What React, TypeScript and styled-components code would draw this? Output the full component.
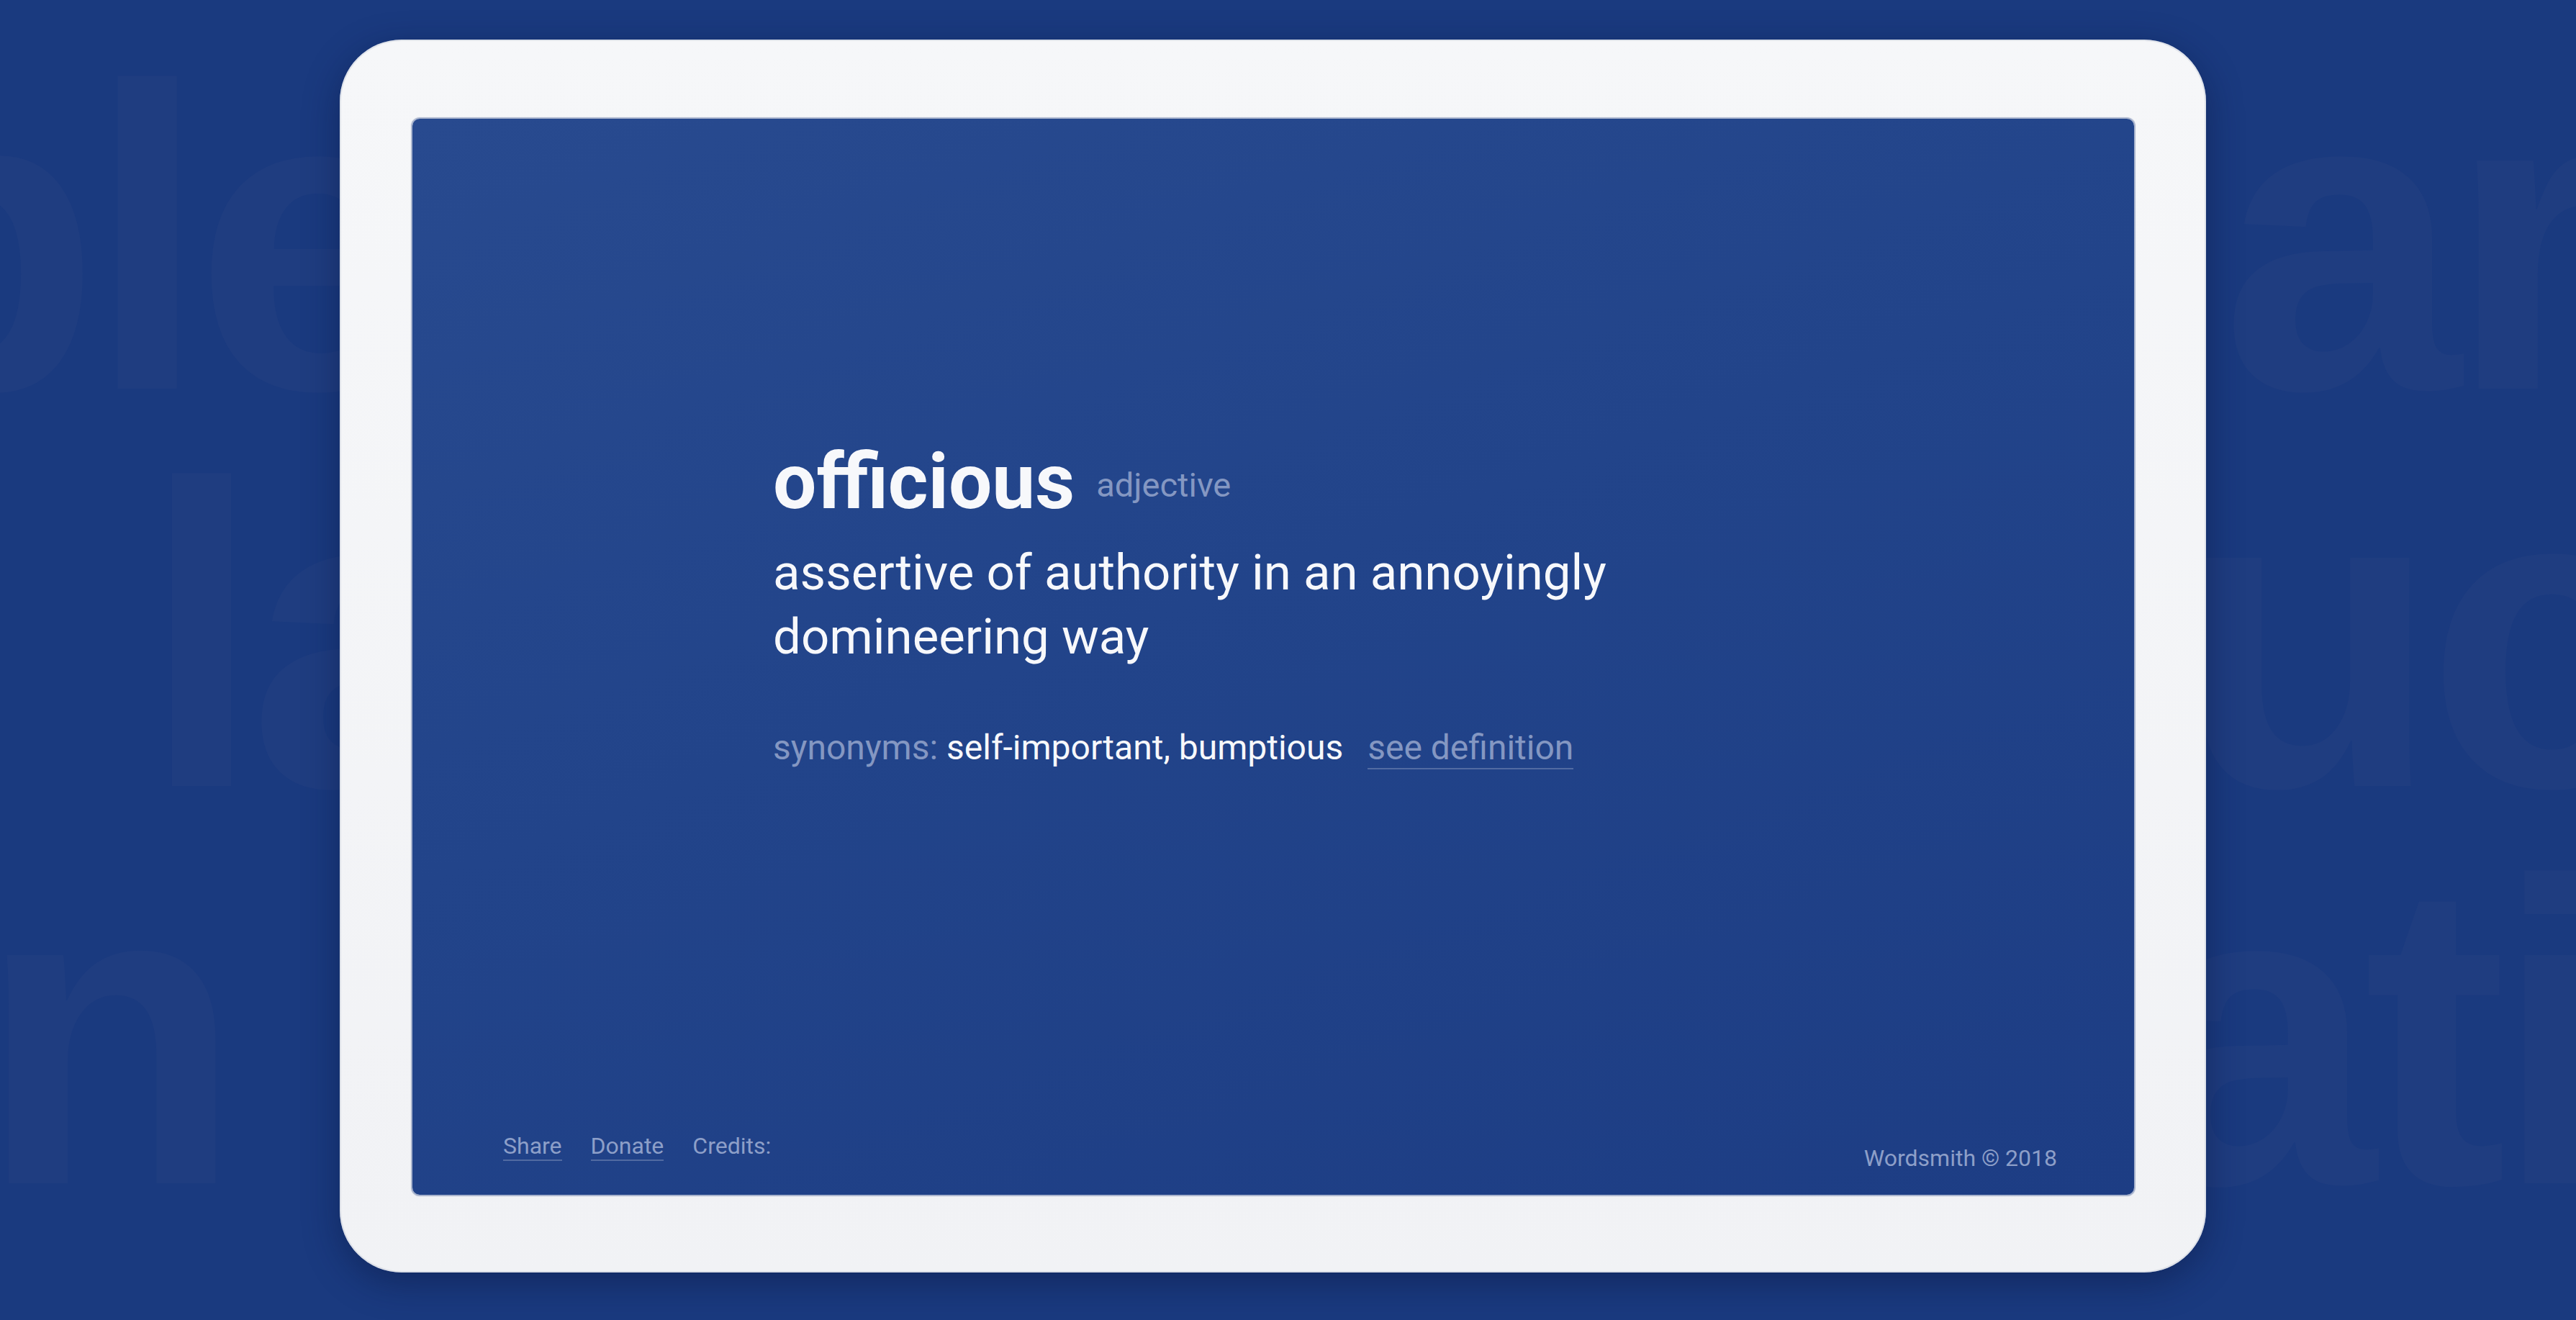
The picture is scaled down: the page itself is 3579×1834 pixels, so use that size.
import React from "react";
import styled, { createGlobalStyle } from "styled-components";

const GlobalStyle = createGlobalStyle`
  html, body {
    margin: 0;
    padding: 0;
    background: #1a3a7f;
    overflow: hidden;
  }
  body {
    font-family: Roboto, "Liberation Sans", Arial, sans-serif;
    -webkit-font-smoothing: antialiased;
  }
  * { box-sizing: border-box; }
`;

const Page = styled.main`
  position: relative;
  width: 100vw;
  height: 100vh;
  overflow: hidden;
  display: flex;
  justify-content: center;
  align-items: flex-start;
  padding: 55px 42px 0 0;
  background: #1a3a7f;
`;

const Backdrop = styled.div`
  position: absolute;
  inset: 0;
  z-index: 0;
  padding-top: 56px;
  display: flex;
  flex-direction: column;
  pointer-events: none;
  overflow: hidden;
`;

const WordRow = styled.div`
  display: flex;
  justify-content: space-between;
  height: 552px;
  line-height: 552px;
  font-family: "Liberation Sans", Arial, sans-serif;
  font-weight: 700;
  font-size: 600px;
  letter-spacing: -18px;
  color: #1f3d80;
  white-space: nowrap;
`;

const WordPiece = styled.span<{ $left?: number; $right?: number }>`
  flex-shrink: 0;
  margin-left: ${(p) => (p.$left ?? 0)}px;
  margin-right: ${(p) => (p.$right ?? 0)}px;
`;

const Tablet = styled.section`
  position: relative;
  z-index: 1;
  width: 2593px;
  height: 1713px;
  padding: 110px 100px 108px 101px;
  border-radius: 86px;
  background: linear-gradient(180deg, #f6f7f9 0%, #f1f2f5 100%);
  box-shadow:
    inset 0 0 0 2px rgba(180, 188, 205, 0.35),
    0 14px 50px rgba(8, 20, 60, 0.45);
`;

const Screen = styled.div`
  height: 100%;
  border-radius: 10px;
  display: flex;
  flex-direction: column;
  background: linear-gradient(160deg, #284a8f 0%, #22448a 45%, #1d3d84 100%);
  box-shadow: 0 0 1px 2px rgba(70, 95, 150, 0.45);
  color: #f7f8fb;
`;

const Entry = styled.article`
  flex: 1;
  padding: 451px 0 0 501px;
`;

const HeadRow = styled.div`
  display: flex;
  align-items: center;
  gap: 30px;
`;

const Headword = styled.h1`
  margin: 0;
  font-size: 107px;
  line-height: 1;
  font-weight: 700;
  color: #f7f8fb;
`;

const PartOfSpeech = styled.span`
  font-size: 47px;
  line-height: 1;
  font-weight: 400;
  padding-top: 8px;
  color: #8497c2;
`;

const Definition = styled.p`
  margin: 28px 0 0;
  max-width: 1250px;
  font-size: 69px;
  line-height: 89px;
  font-weight: 400;
  color: #f7f8fb;
`;

const Synonyms = styled.p`
  margin: 80px 0 0;
  font-size: 48px;
  line-height: 60px;
  font-weight: 400;
  color: #f7f8fb;
`;

const Muted = styled.span`
  color: #8497c2;
`;

const SeeLink = styled.a`
  margin-left: 34px;
  color: #8497c2;
  text-decoration: none;
  border-bottom: 2px solid rgba(255, 255, 255, 0.22);
`;

const Footer = styled.footer`
  display: flex;
  justify-content: space-between;
  align-items: flex-end;
  padding: 0 107px 32px 126px;
  font-size: 32px;
  line-height: 38px;
  color: #8d9fc8;
`;

const FooterNav = styled.nav`
  display: flex;
  gap: 40px;
  margin-bottom: 15px;
`;

const FooterLink = styled.a<{ $plain?: boolean }>`
  color: #8d9fc8;
  text-decoration: none;
  border-bottom: 2px solid ${(p) => (p.$plain ? "transparent" : "rgba(255, 255, 255, 0.22)")};
`;

const Copyright = styled.span`
  color: #8d9fc8;
`;

const rows = [
  { left: "ple", leftOffset: -227, right: "ar", rightOffset: -38 },
  { left: "la", leftOffset: 197, right: "uc", rightOffset: -108 },
  { left: "n", leftOffset: -30, right: "ati", rightOffset: -35 },
];

export default function App() {
  return (
    <>
      <GlobalStyle />
      <Page>
        <Backdrop aria-hidden="true">
          {rows.map((r) => (
            <WordRow key={r.left}>
              <WordPiece $left={r.leftOffset}>{r.left}</WordPiece>
              <WordPiece $right={r.rightOffset}>{r.right}</WordPiece>
            </WordRow>
          ))}
        </Backdrop>
        <Tablet>
          <Screen>
            <Entry>
              <HeadRow>
                <Headword>officious</Headword>
                <PartOfSpeech>adjective</PartOfSpeech>
              </HeadRow>
              <Definition>assertive of authority in an annoyingly domineering way</Definition>
              <Synonyms>
                <Muted>synonyms: </Muted>self-important, bumptious
                <SeeLink href="#">see definition</SeeLink>
              </Synonyms>
            </Entry>
            <Footer>
              <FooterNav>
                <FooterLink href="#">Share</FooterLink>
                <FooterLink href="#">Donate</FooterLink>
                <FooterLink as="span" $plain>Credits:</FooterLink>
              </FooterNav>
              <Copyright>Wordsmith © 2018</Copyright>
            </Footer>
          </Screen>
        </Tablet>
      </Page>
    </>
  );
}
